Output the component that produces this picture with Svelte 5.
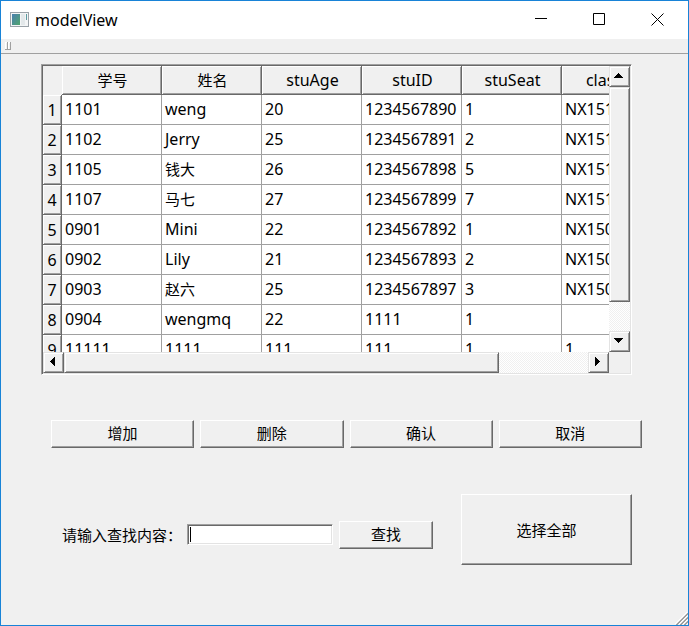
<script lang="ts">
  let columns = ['学号', '姓名', 'stuAge', 'stuID', 'stuSeat', 'classID'];

  let rows = [
    ['1101', 'weng', '20', '1234567890', '1', 'NX151'],
    ['1102', 'Jerry', '25', '1234567891', '2', 'NX151'],
    ['1105', '钱大', '26', '1234567898', '5', 'NX151'],
    ['1107', '马七', '27', '1234567899', '7', 'NX151'],
    ['0901', 'Mini', '22', '1234567892', '1', 'NX150'],
    ['0902', 'Lily', '21', '1234567893', '2', 'NX150'],
    ['0903', '赵六', '25', '1234567897', '3', 'NX150'],
    ['0904', 'wengmq', '22', '1111', '1', ''],
    ['11111', '1111', '111', '111', '1', '1'],
  ];

  let actions = ['增加', '删除', '确认', '取消'];
  let keyword = $state('');
  let view: HTMLDivElement;

  function isHan(text: string) {
    return /\p{Script=Han}/u.test(text);
  }

  function scroll(dx: number, dy: number) {
    view.scrollBy(dx * 100, dy * 30);
  }
</script>

<div class="window">
  <header class="titlebar">
    <svg class="app-icon" width="19" height="15" viewBox="0 0 19 15">
      <defs>
        <linearGradient id="pane" x1="0" y1="0" x2="1" y2="1">
          <stop offset="0" stop-color="#4a7fb0" />
          <stop offset="1" stop-color="#4fa56c" />
        </linearGradient>
      </defs>
      <rect x="0.5" y="0.5" width="18" height="14" fill="#f3f5f6" stroke="#9aa2a8" />
      <rect x="2" y="2" width="8" height="11" fill="url(#pane)" />
      <rect x="11" y="2" width="4" height="11" fill="#e3e8ea" />
      <rect x="16" y="2" width="1" height="6" fill="#5b9aa0" />
    </svg>
    <h1>modelView</h1>
    <button class="control" aria-label="Minimize">
      <svg width="13" height="13" viewBox="0 0 13 13"><path d="M0 5.5h12" /></svg>
    </button>
    <button class="control" aria-label="Maximize">
      <svg width="13" height="13" viewBox="0 0 13 13"><path d="M.5.5h11v11H.5z" /></svg>
    </button>
    <button class="control" aria-label="Close">
      <svg width="13" height="13" viewBox="0 0 13 13"><path d="M.5.5l12 12M12.5.5l-12 12" /></svg>
    </button>
  </header>

  <div class="toolbar">
    <span class="grip"></span>
    <span class="grip"></span>
  </div>

  <main>
    <section class="table-frame">
      <div class="view" bind:this={view}>
        <table>
          <colgroup>
            <col class="index-col" />
            {#each columns as _}
              <col class="data-col" />
            {/each}
          </colgroup>
          <thead>
            <tr>
              <td class="corner"></td>
              {#each columns as column}
                <th scope="col" class:han={isHan(column)}>{column}</th>
              {/each}
            </tr>
          </thead>
          <tbody>
            {#each rows as row, i}
              <tr>
                <th scope="row">{i + 1}</th>
                {#each row as cell}
                  <td class:han={isHan(cell)}>{cell}</td>
                {/each}
              </tr>
            {/each}
          </tbody>
        </table>
      </div>

      <div class="scrollbar vertical">
        <button aria-label="Scroll up" onclick={() => scroll(0, -1)}>
          <svg width="9" height="5" viewBox="0 0 9 5"><path d="M4 0h1v1h1v1h1v1h1v1h1v1H0V4h1V3h1V2h1V1h1z" /></svg>
        </button>
        <div class="trough"><div class="thumb"></div></div>
        <button aria-label="Scroll down" onclick={() => scroll(0, 1)}>
          <svg width="9" height="5" viewBox="0 0 9 5"><path d="M0 0h9v1H8v1H7v1H6v1H5v1H4V4H3V3H2V2H1V1H0z" /></svg>
        </button>
      </div>

      <div class="scrollbar horizontal">
        <button aria-label="Scroll left" onclick={() => scroll(-1, 0)}>
          <svg width="5" height="9" viewBox="0 0 5 9"><path d="M5 0v9H4V8H3V7H2V6H1V5H0V4h1V3h1V2h1V1h1V0z" /></svg>
        </button>
        <div class="trough"><div class="thumb"></div></div>
        <button aria-label="Scroll right" onclick={() => scroll(1, 0)}>
          <svg width="5" height="9" viewBox="0 0 5 9"><path d="M0 0h1v1h1v1h1v1h1v1h1v1H4v1H3v1H2v1H1v1H0z" /></svg>
        </button>
      </div>
    </section>

    <div class="actions">
      {#each actions as action}
        <button class="push">{action}</button>
      {/each}
    </div>

    <div class="search">
      <label for="keyword">请输入查找内容：</label>
      <div class="field">
        <span class="caret"></span>
        <input id="keyword" type="text" bind:value={keyword} />
      </div>
      <button class="push find">查找</button>
      <button class="push select-all">选择全部</button>
    </div>
  </main>

  <svg class="size-grip" width="13" height="13" viewBox="0 0 13 13">
    <path class="light" d="M0 12L12 0M4 12L12 4M8 12L12 8" />
    <path class="dark" d="M1 13L13 1M2 13L13 2M5 13L13 5M6 13L13 6M9 13L13 9M10 13L13 10" />
  </svg>
</div>

<style>
  :global(body) {
    margin: 0;
    background: #f0f0f0;
    color: #000;
    font-family: 'Noto Sans', 'Noto Sans CJK SC', sans-serif;
  }

  .window {
    position: relative;
    box-sizing: border-box;
    min-height: 100vh;
    border: 1px solid #1883d7;
    background: #f0f0f0;
  }

  button {
    display: flex;
    align-items: center;
    justify-content: center;
    padding: 0;
    border: none;
    background: #f0f0f0;
    color: #000;
    font: inherit;
  }

  .titlebar {
    display: flex;
    align-items: center;
    height: 38px;
    padding: 0 2px 0 9px;
    background: #fff;
  }

  .app-icon {
    margin-bottom: 2px;
  }

  h1 {
    flex: 1;
    margin: 0 0 0 6px;
    font-size: 16px;
    font-weight: 400;
    line-height: 20px;
  }

  .control {
    width: 58px;
    height: 38px;
    padding-bottom: 2px;
    background: #fff;
  }

  .control path {
    fill: none;
    stroke: #000;
  }

  .toolbar {
    display: flex;
    height: 11px;
    padding: 3px 0 0 4px;
    border-bottom: 1px solid #a0a0a0;
  }

  .grip {
    box-sizing: border-box;
    width: 3px;
    height: 8px;
    border: 1px solid #a0a0a0;
    border-width: 0 1px 1px 0;
    box-shadow: inset 1px 1px #fff;
  }

  main {
    padding: 10px 46px 40px 50px;
  }

  .table-frame {
    display: grid;
    grid-template-columns: minmax(0, 1fr) 21px;
    grid-template-rows: 286px 21px;
    margin: 0 10px 0 -10px;
    border: 1px solid;
    border-color: #a0a0a0 #fff #fff #a0a0a0;
    padding: 1px;
    box-shadow: inset 1px 1px #696969, inset -1px -1px #e3e3e3;
  }

  .view {
    overflow: hidden;
    background: #fff;
  }

  table {
    width: 619px;
    table-layout: fixed;
    border-collapse: separate;
    border-spacing: 0;
    font-size: 16px;
    line-height: 20px;
  }

  .index-col {
    width: 19px;
  }

  .data-col {
    width: 100px;
  }

  td,
  th {
    box-sizing: border-box;
    height: 30px;
    padding: 0 3px 2px;
    border: 1px solid #a0a0a0;
    border-width: 0 1px 1px 0;
    font-weight: 400;
    text-align: left;
    white-space: nowrap;
  }

  th {
    padding: 0;
    border-color: #696969;
    background: #f0f0f0;
    box-shadow: inset 1px 1px #fff, inset -1px -1px #a0a0a0;
    text-align: center;
  }

  thead th,
  .corner {
    height: 29px;
  }

  thead th {
    padding-left: 2px;
  }

  .corner {
    padding: 0;
    border: none;
    background: #f0f0f0;
  }

  .han {
    font-size: 15px;
  }

  .scrollbar {
    display: flex;
  }

  .vertical {
    flex-direction: column;
  }

  .scrollbar button,
  .thumb {
    box-sizing: border-box;
    flex: none;
    border: 1px solid;
    border-color: #e3e3e3 #696969 #696969 #e3e3e3;
    background: #f0f0f0;
    box-shadow: inset 1px 1px #fff, inset -1px -1px #a0a0a0;
  }

  .scrollbar button {
    width: 21px;
    height: 21px;
    padding: 0 2px 2px 0;
  }

  .trough {
    flex: 1;
    background: repeating-conic-gradient(#fff 0 25%, #f0f0f0 0 50%) 0 0 / 2px 2px;
  }

  .vertical .thumb {
    height: 88%;
  }

  .horizontal .thumb {
    width: 83%;
    height: 100%;
  }

  .push {
    box-sizing: border-box;
    height: 28px;
    border: 1px solid;
    border-color: #fff #696969 #696969 #fff;
    box-shadow: inset -1px -1px #a0a0a0;
    font-size: 15px;
    line-height: 20px;
  }

  .actions {
    display: grid;
    grid-template-columns: repeat(4, 1fr);
    gap: 6px;
    margin-top: 45px;
  }

  .actions .push {
    padding-bottom: 2px;
  }

  .search {
    display: flex;
    align-items: center;
    margin: 46px 10px 0 11px;
    font-size: 15px;
    line-height: 20px;
  }

  label {
    flex: none;
    margin-top: 10px;
  }

  .field {
    display: flex;
    flex: 1;
    align-items: center;
    box-sizing: border-box;
    min-width: 0;
    height: 21px;
    margin: 10px 6px 0 5px;
    padding: 1px 1px 1px 2px;
    border: 1px solid;
    border-color: #a0a0a0 #fff #fff #a0a0a0;
    background: #fff;
    box-shadow: inset 1px 1px #696969, inset -1px -1px #e3e3e3;
  }

  .caret {
    width: 1px;
    height: 15px;
    background: #000;
  }

  input {
    flex: 1;
    min-width: 0;
    padding: 0;
    border: none;
    outline: none;
    background: none;
    font: inherit;
    line-height: 16px;
  }

  .find {
    width: 94px;
    margin-top: 10px;
    padding-bottom: 2px;
  }

  .select-all {
    width: 171px;
    height: 71px;
    margin-left: 28px;
  }

  .size-grip {
    position: absolute;
    right: 0;
    bottom: 0;
  }

  .size-grip path {
    fill: none;
  }

  .light {
    stroke: #fff;
  }

  .dark {
    stroke: #a0a0a0;
  }
</style>
